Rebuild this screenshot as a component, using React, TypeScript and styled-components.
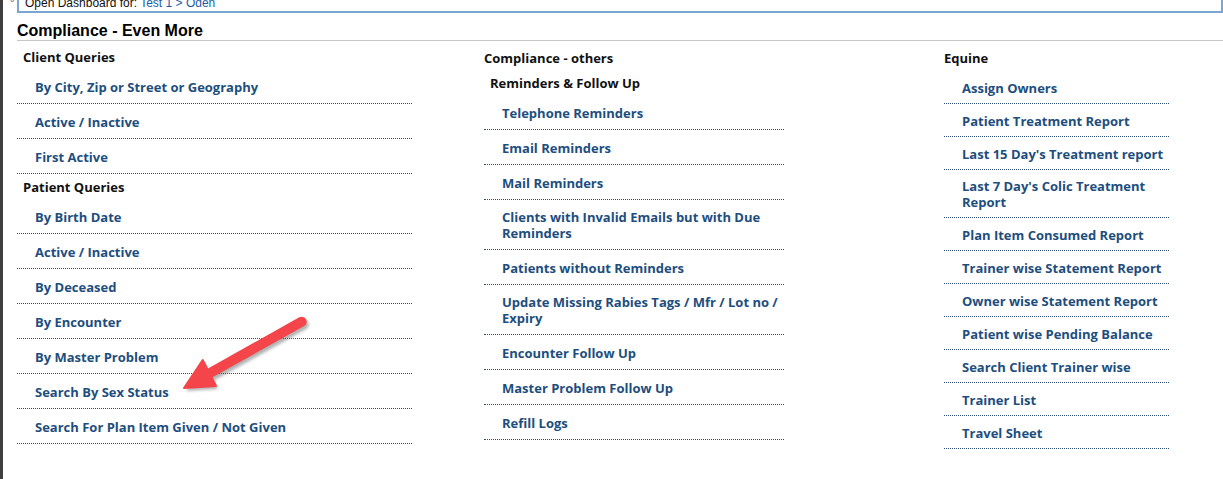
import React from "react";
import styled, { createGlobalStyle } from "styled-components";

const GlobalStyle = createGlobalStyle`
  html, body { margin: 0; padding: 0; background: #ffffff; }
  body { overflow: hidden; }
`;

const Page = styled.div`
  display: flex;
  width: 1223px;
  height: 479px;
  position: relative;
  overflow: hidden;
  background: #ffffff;
`;

const Sidebar = styled.div`
  width: 3px;
  flex: none;
  background: #3f3f3f;
`;

const Main = styled.div`
  flex: 1;
  padding-left: 14px;
  display: flex;
  flex-direction: column;
`;

const TopRow = styled.div`
  display: flex;
  margin-top: -6px;
`;

const Marker = styled.span`
  width: 14px;
  margin-left: -14px;
  font: 11px/11px "DejaVu Sans", sans-serif;
  color: #666;
  text-align: right;
  padding: 3px 2px 0 0;
  box-sizing: border-box;
`;

const DashBox = styled.div`
  flex: 1;
  height: 15px;
  padding-top: 2px;
  border: 2px solid #79a6d2;
  border-top: none;
  font: 12px/15px "Liberation Sans", Arial, sans-serif;
  color: #111;
  padding-left: 6px;
  white-space: nowrap;
  overflow: hidden;
`;

const Crumb = styled.span`
  color: #1b5ca8;
`;

const Title = styled.h1`
  margin: 0;
  padding: 9px 0 0;
  font: bold 16px/18px "Liberation Sans", Arial, sans-serif;
  color: #000;
  border-bottom: 1px solid #c6c6c6;
`;

const Columns = styled.div`
  display: grid;
  grid-template-columns: 467px 460px 1fr;
  padding-top: 4px;
`;

const Column = styled.section<{ $width: number }>`
  width: ${(p) => p.$width}px;
  display: flex;
  flex-direction: column;
`;

const GroupHeader = styled.div<{ $indent: number; $height?: number }>`
  height: ${(p) => p.$height ?? 25}px;
  display: flex;
  align-items: center;
  padding-left: ${(p) => p.$indent}px;
  font-family: "Open Sans", "DejaVu Sans", sans-serif;
  font-weight: 700;
  font-size: 13px;
  color: #111;
  white-space: nowrap;
`;

const LinkRow = styled.a<{ $compact?: boolean }>`
  display: flex;
  align-items: center;
  box-sizing: border-box;
  min-height: ${(p) => (p.$compact ? 33 : 35)}px;
  padding: ${(p) => (p.$compact ? "8px 0 7px 18px" : "9px 0 8px 18px")};
  line-height: 16px;
  font-family: "Open Sans", "DejaVu Sans", sans-serif;
  font-weight: 700;
  font-size: 13px;
  color: #1d4e7e;
  text-decoration: none;
  border-bottom: 1px dotted #2c4f78;
`;

const ArrowLayer = styled.svg`
  position: absolute;
  left: 180px;
  top: 312px;
  width: 140px;
  height: 90px;
  pointer-events: none;
`;

const clientQueries = ["By City, Zip or Street or Geography", "Active / Inactive", "First Active"];
const patientQueries = [
  "By Birth Date",
  "Active / Inactive",
  "By Deceased",
  "By Encounter",
  "By Master Problem",
  "Search By Sex Status",
  "Search For Plan Item Given / Not Given",
];
const reminders = [
  "Telephone Reminders",
  "Email Reminders",
  "Mail Reminders",
  "Clients with Invalid Emails but with Due Reminders",
  "Patients without Reminders",
  "Update Missing Rabies Tags / Mfr / Lot no / Expiry",
  "Encounter Follow Up",
  "Master Problem Follow Up",
  "Refill Logs",
];
const equine = [
  "Assign Owners",
  "Patient Treatment Report",
  "Last 15 Day's Treatment report",
  "Last 7 Day's Colic Treatment Report",
  "Plan Item Consumed Report",
  "Trainer wise Statement Report",
  "Owner wise Statement Report",
  "Patient wise Pending Balance",
  "Search Client Trainer wise",
  "Trainer List",
  "Travel Sheet",
];

export default function App() {
  return (
    <Page>
      <GlobalStyle />
      <Sidebar />
      <Main>
        <TopRow>
          <Marker>°</Marker>
          <DashBox>
            Open Dashboard for: <Crumb>Test 1 &gt; Oden</Crumb>
          </DashBox>
        </TopRow>
        <Title>Compliance - Even More</Title>
        <Columns>
          <Column $width={395}>
            <GroupHeader $indent={6} $height={24}>Client Queries</GroupHeader>
            {clientQueries.map((t) => (
              <LinkRow key={t} href="#">{t}</LinkRow>
            ))}
            <GroupHeader $indent={6}>Patient Queries</GroupHeader>
            {patientQueries.map((t) => (
              <LinkRow key={t} href="#">{t}</LinkRow>
            ))}
          </Column>
          <Column $width={300}>
            <GroupHeader $indent={0}>Compliance - others</GroupHeader>
            <GroupHeader $indent={6}>Reminders &amp; Follow Up</GroupHeader>
            {reminders.map((t) => (
              <LinkRow key={t} href="#">{t}</LinkRow>
            ))}
          </Column>
          <Column $width={225}>
            <GroupHeader $indent={0} $height={26}>Equine</GroupHeader>
            {equine.map((t) => (
              <LinkRow key={t} href="#" $compact>{t}</LinkRow>
            ))}
          </Column>
        </Columns>
      </Main>
      <ArrowLayer viewBox="0 0 140 90">
        <defs>
          <filter id="arrowShadow" x="-20%" y="-20%" width="140%" height="140%">
            <feGaussianBlur stdDeviation="1.6" />
          </filter>
        </defs>
        <g transform="translate(2 3)" opacity="0.45" filter="url(#arrowShadow)">
          <line x1="121.7" y1="9.7" x2="30" y2="61" stroke="#555" strokeWidth="10" strokeLinecap="round" />
          <polygon points="4,76 22.7,48 36,74" fill="#555" />
        </g>
        <line x1="121.7" y1="9.7" x2="30" y2="61" stroke="#f4454b" strokeWidth="10" strokeLinecap="round" />
        <polygon points="4,76 22.7,48 36,74" fill="#f4454b" stroke="#f4454b" strokeWidth="2" strokeLinejoin="round" />
      </ArrowLayer>
    </Page>
  );
}
